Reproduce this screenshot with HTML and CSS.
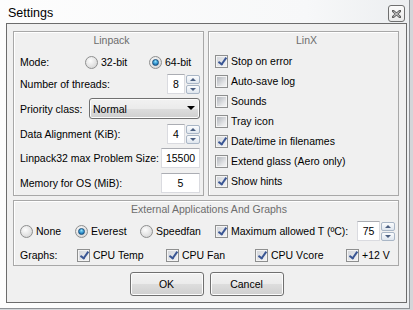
FILE: index.html
```html
<!DOCTYPE html>
<html lang="en">
<head>
	<meta charset="UTF-8">
	<title>Settings</title>
	<link rel="stylesheet" href="styles.css">
</head>
<body>
<div class="window">
	<div class="titlebar">
		<span class="caption">Settings</span>
		<a class="close" href="javascript:">
			<svg width="9" height="8" viewBox="0 0 9 8">
				<path d="M1 1 L8 7 M8 1 L1 7" stroke="#5c5c5c" stroke-width="2.6" stroke-linecap="square"/>
				<path d="M1.5 1.4 L7.5 6.6 M7.5 1.4 L1.5 6.6" stroke="#e6e6e6" stroke-width="0.9"/>
			</svg>
		</a>
	</div>
	<div class="client">
		<div class="top">
			<div class="group linpack">
				<div class="legend">Linpack</div>
				<div class="row mode">
					<span class="lbl-mode">Mode:</span>
					<span class="opt w64"><span class="radio"></span>32-bit</span>
					<span class="opt"><span class="radio on"></span>64-bit</span>
				</div>
				<div class="row r-threads">
					<span>Number of threads:</span>
					<span class="spin"><span class="edit">8</span><span class="arrows"><span class="up"></span><span class="down"></span></span></span>
				</div>
				<div class="row r-prio">
					<span>Priority class:</span>
					<span class="combo">Normal<span class="drop"></span></span>
				</div>
				<div class="row r-align">
					<span>Data Alignment (KiB):</span>
					<span class="spin"><span class="edit">4</span><span class="arrows"><span class="up"></span><span class="down"></span></span></span>
				</div>
				<div class="row r-size">
					<span>Linpack32 max Problem Size:</span>
					<span class="edit wide">15500</span>
				</div>
				<div class="row r-mem">
					<span>Memory for OS (MiB):</span>
					<span class="edit wide">5</span>
				</div>
			</div>
			<div class="group linx">
				<div class="legend">LinX</div>
				<div class="checks">
					<div class="check-row"><span class="check on"></span>Stop on error</div>
					<div class="check-row"><span class="check"></span>Auto-save log</div>
					<div class="check-row"><span class="check"></span>Sounds</div>
					<div class="check-row"><span class="check"></span>Tray icon</div>
					<div class="check-row"><span class="check on"></span>Date/time in filenames</div>
					<div class="check-row"><span class="check"></span>Extend glass (Aero only)</div>
					<div class="check-row"><span class="check on"></span>Show hints</div>
				</div>
			</div>
		</div>
		<div class="group external">
			<div class="legend">External Applications And Graphs</div>
			<div class="row ext-apps">
				<span class="opt w55"><span class="radio"></span>None</span>
				<span class="opt w65"><span class="radio on"></span>Everest</span>
				<span class="opt w75"><span class="radio"></span>Speedfan</span>
				<span class="opt"><span class="check on"></span>Maximum allowed T (ºC):</span>
				<span class="spin"><span class="edit temp">75</span><span class="arrows"><span class="up"></span><span class="down"></span></span></span>
			</div>
			<div class="row ext-graphs">
				<span class="w57">Graphs:</span>
				<span class="opt w89"><span class="check on"></span>CPU Temp</span>
				<span class="opt w89"><span class="check on"></span>CPU Fan</span>
				<span class="opt w91"><span class="check on"></span>CPU Vcore</span>
				<span class="opt"><span class="check on"></span>+12 V</span>
			</div>
		</div>
		<div class="buttons">
			<a class="btn" href="javascript:">OK</a>
			<a class="btn" href="javascript:">Cancel</a>
		</div>
	</div>
</div>
</body>
</html>
```

FILE: styles.css
```css
html, body {
	margin: 0;
	padding: 0;
	background: #d3d6d9;
}
body {
	font-family: "Liberation Sans", Arial, sans-serif;
	font-size: 10.5px;
	color: #000;
}
.window {
	width: 409px;
	height: 308px;
	border-right: 1px solid #8e9195;
	border-bottom: 1px solid #8e9195;
	background: linear-gradient(to right, #fdfdfd, #f7f8f9 75%, #eceef0);
}
.titlebar {
	height: 23px;
	display: flex;
	justify-content: space-between;
	padding: 0 4px 0 8px;
	box-sizing: border-box;
}
.caption {
	font-size: 12.5px;
	line-height: 14px;
	margin-top: 6px;
}
.close {
	margin-top: 5px;
	width: 17px;
	height: 17px;
	box-sizing: border-box;
	border: 1px solid #6f6f6f;
	border-radius: 3px;
	background: linear-gradient(#fbfbfb, #e9e9e9);
	display: flex;
	align-items: center;
	justify-content: center;
}
.client {
	margin-left: 6px;
	width: 401px;
	height: 280px;
	box-sizing: border-box;
	border: 1px solid #6c6c6c;
	background: #f0f0f0;
	padding: 7px 0 0 6px;
	white-space: nowrap;
}
.top {
	display: flex;
	gap: 4px;
}
.group {
	box-sizing: border-box;
	border: 1px solid #a8a8a8;
	box-shadow: inset 1px 1px 0 #fff;
	padding: 0 3px 0 6px;
}
.linpack, .linx {
	width: 191px;
	height: 165px;
}
.legend {
	height: 17px;
	line-height: 17px;
	text-align: center;
	color: #6d6d6d;
	margin-right: -3px;
}
.row {
	display: flex;
	align-items: center;
	justify-content: space-between;
	height: 20px;
}
.mode { margin-top: 3px; justify-content: flex-start; }
.r-threads { margin-top: 2px; }
.r-prio { margin-top: 4px; height: 21px; }
.r-align { margin-top: 5px; }
.r-size { margin-top: 4px; }
.r-mem { margin-top: 5px; }
.lbl-mode { width: 65px; }
.opt {
	display: flex;
	align-items: center;
}
.w55 { width: 55px; }
.w57 { width: 57px; }
.w64 { width: 64px; }
.w65 { width: 65px; }
.w75 { width: 75px; }
.w89 { width: 89px; }
.w91 { width: 91px; }
.radio {
	width: 13px;
	height: 13px;
	box-sizing: border-box;
	border: 1px solid #8e8f8f;
	border-radius: 50%;
	background: radial-gradient(circle at 40% 35%, #fdfdfd, #dcdcdc 70%, #c8c8c8);
	margin-right: 3px;
	position: relative;
}
.radio.on::after {
	content: "";
	position: absolute;
	left: 2px;
	top: 2px;
	width: 7px;
	height: 7px;
	box-sizing: border-box;
	border-radius: 50%;
	border: 1px solid #1b4f7c;
	background: radial-gradient(circle at 50% 30%, #8fe0fb, #2a8bc8 60%, #0f5d96);
}
.check {
	width: 13px;
	height: 13px;
	box-sizing: border-box;
	border: 1px solid #8e8f8f;
	background: #f4f4f4;
	margin-right: 3px;
	position: relative;
	flex-shrink: 0;
}
.check::before {
	content: "";
	position: absolute;
	left: 1px;
	top: 1px;
	width: 9px;
	height: 9px;
	background: linear-gradient(135deg, #b2b6bc, #e4e5e7 70%, #f2f2f2);
}
.check.on::before {
	background: linear-gradient(135deg, #d4d7dc, #f0f0f2);
}
.check.on::after {
	content: "";
	position: absolute;
	left: 4px;
	top: 0px;
	width: 3px;
	height: 7px;
	border: solid #3a5694;
	border-width: 0 2px 2px 0;
	transform: rotate(35deg);
}
.checks {
	margin-top: 2px;
}
.check-row {
	display: flex;
	align-items: center;
	height: 20px;
}
.spin {
	display: flex;
	align-items: center;
}
.edit {
	display: flex;
	align-items: center;
	justify-content: center;
	width: 18px;
	height: 20px;
	box-sizing: border-box;
	background: #fff;
	border: 1px solid #dadbe0;
	border-top-color: #abadb3;
}
.edit.wide { width: 39px; }
.edit.temp { width: 23px; }
.arrows {
	display: flex;
	flex-direction: column;
	gap: 1px;
	margin-left: 1px;
}
.up, .down {
	width: 14px;
	height: 9px;
	box-sizing: border-box;
	border: 1px solid #a9b6c6;
	border-radius: 2px;
	background: linear-gradient(#fbfcfd, #dfe6ee);
	display: flex;
	align-items: center;
	justify-content: center;
}
.up::after, .down::after {
	content: "";
	border-left: 3px solid transparent;
	border-right: 3px solid transparent;
}
.up::after { border-bottom: 3px solid #4b5f81; }
.down::after { border-top: 3px solid #4b5f81; }
.combo {
	position: relative;
	width: 111px;
	height: 21px;
	box-sizing: border-box;
	border: 1px solid #707070;
	border-radius: 3px;
	background: linear-gradient(#f2f2f2, #ebebeb 50%, #dddddd 51%, #cfcfcf);
	box-shadow: inset 0 0 0 1px #fcfcfc;
	padding-left: 3px;
	display: flex;
	align-items: center;
}
.drop {
	position: absolute;
	right: 4px;
	top: 7px;
	border-left: 4px solid transparent;
	border-right: 4px solid transparent;
	border-top: 4px solid #000;
}
.external {
	margin-top: 4px;
	width: 386px;
	height: 66px;
}
.ext-apps {
	margin-top: 3px;
	justify-content: flex-start;
}
.ext-apps .spin { margin-left: auto; }
.ext-graphs {
	margin-top: 5px;
	height: 18px;
	justify-content: flex-start;
}
.buttons {
	display: flex;
	justify-content: center;
	gap: 6px;
	margin-top: 6px;
	margin-left: -6px;
}
.btn {
	width: 74px;
	height: 24px;
	box-sizing: border-box;
	border: 1px solid #707070;
	border-radius: 3px;
	background: linear-gradient(#f2f2f2, #ebebeb 50%, #dddddd 51%, #cfcfcf);
	box-shadow: inset 0 0 0 1px #fcfcfc;
	color: #000;
	text-decoration: none;
	display: flex;
	align-items: center;
	justify-content: center;
}
```
